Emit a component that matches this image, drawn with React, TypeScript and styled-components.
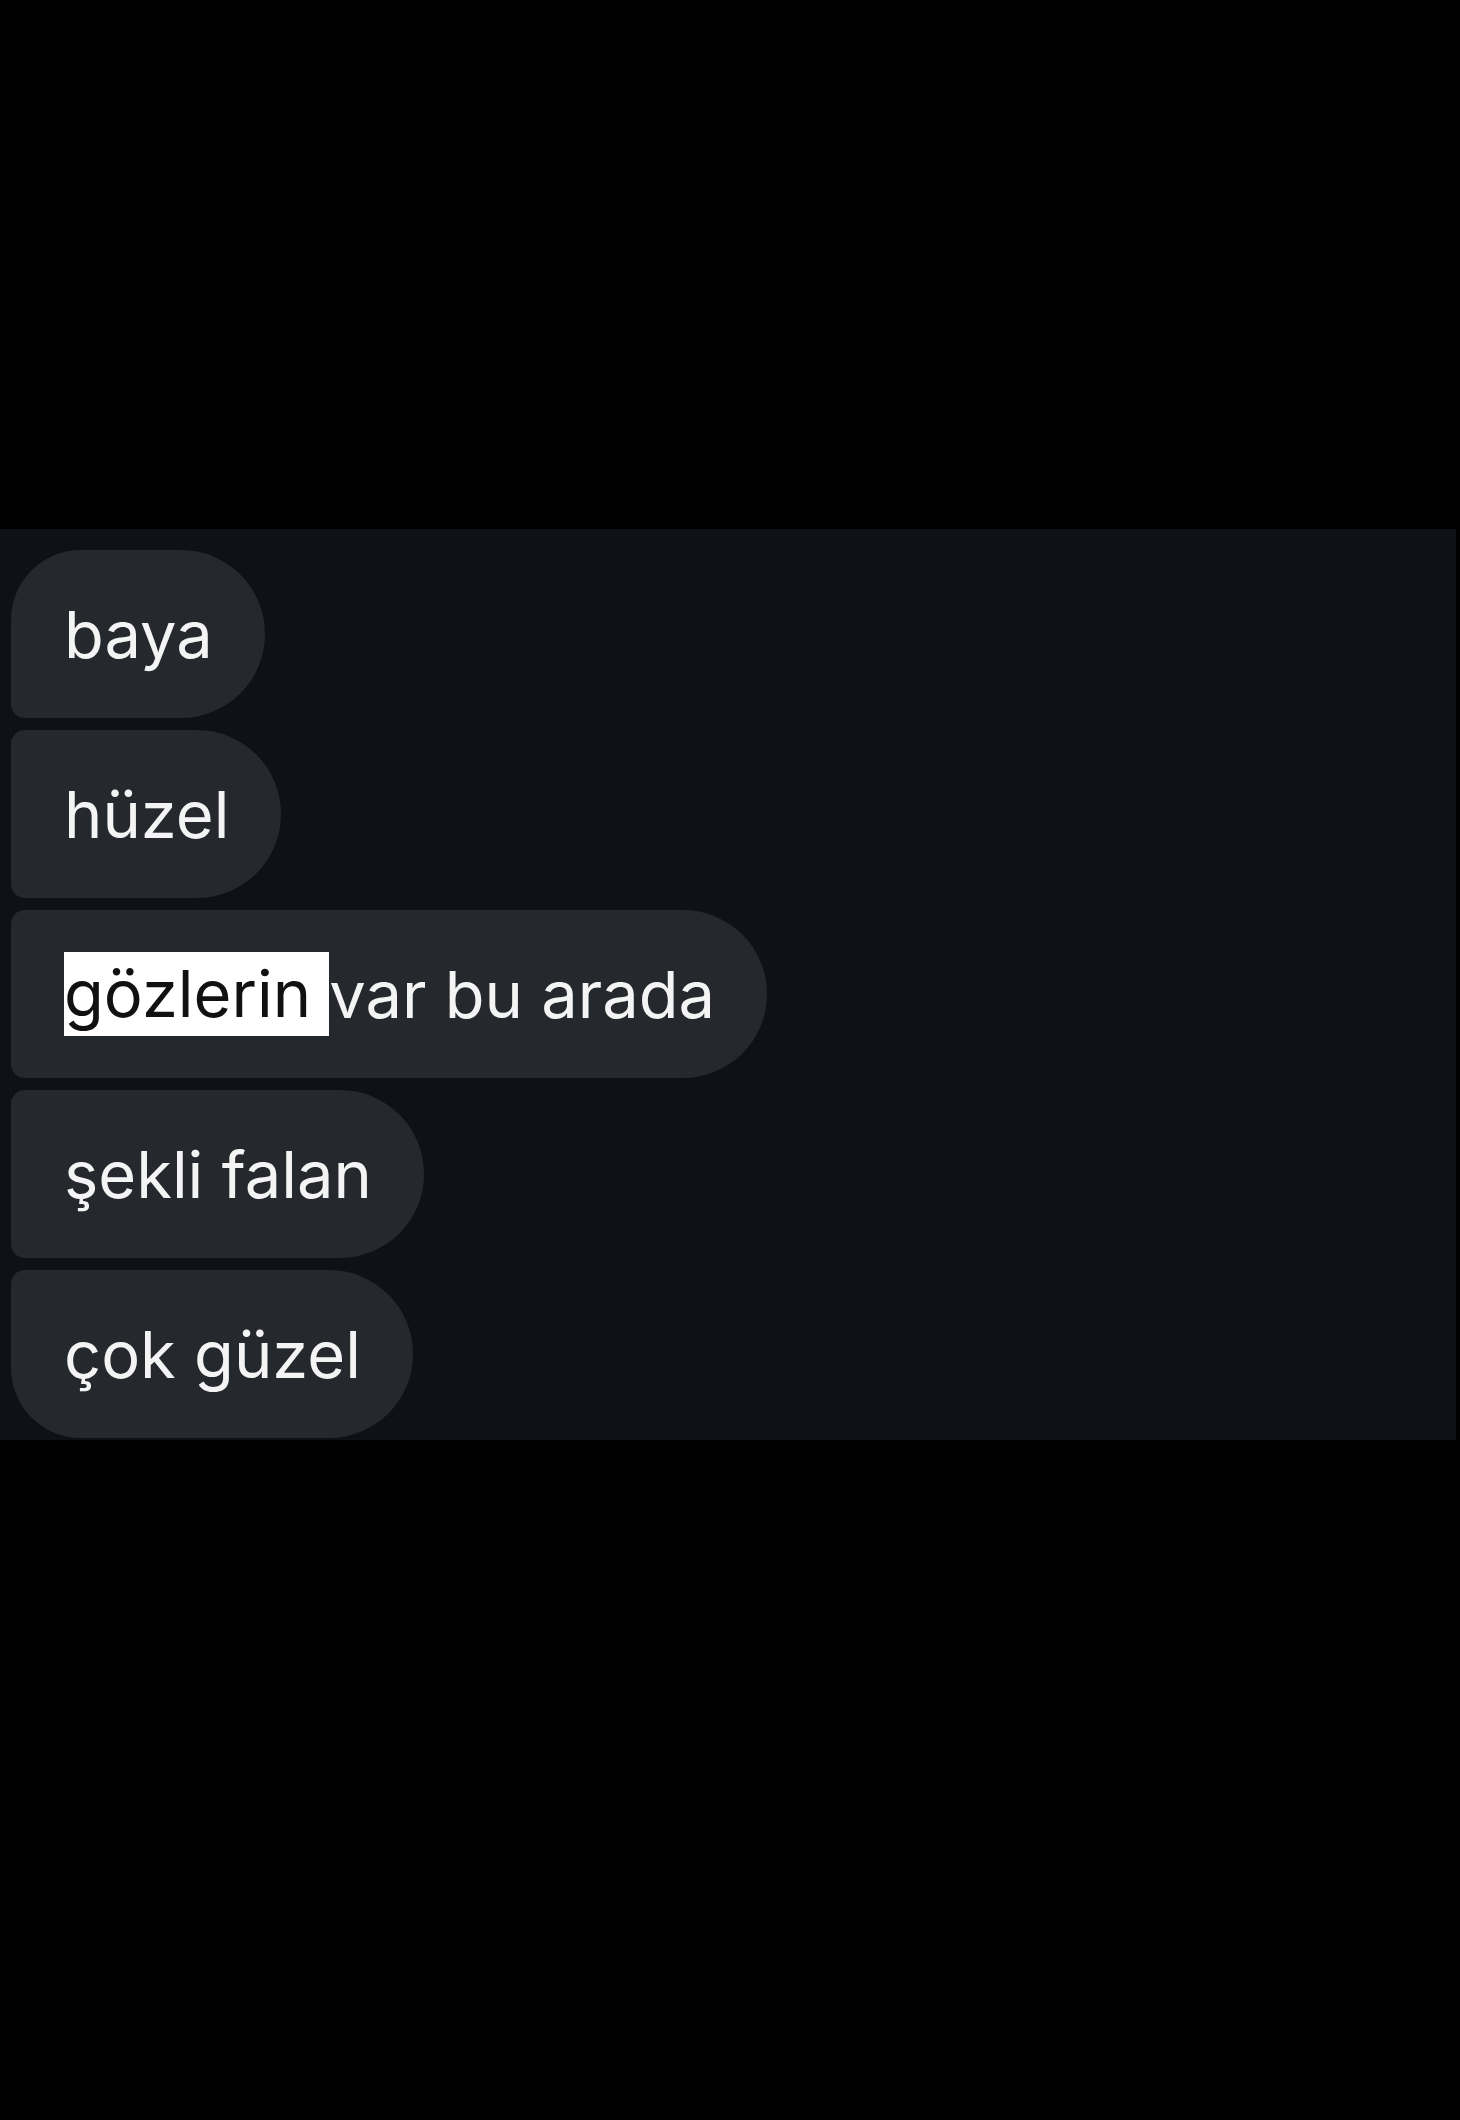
import React from 'react';
import styled, { createGlobalStyle } from 'styled-components';

const GlobalStyle = createGlobalStyle`
  html, body {
    margin: 0;
    padding: 0;
    background: #000;
  }
  body {
    font-family: Inter, "Liberation Sans", Arial, sans-serif;
  }
`;

const Page = styled.div`
  width: 1460px;
  min-height: 2120px;
  padding-top: 529px;
  box-sizing: border-box;
  background: #000;
`;

const ChatPanel = styled.section`
  width: 1456px;
  height: 911px;
  box-sizing: border-box;
  padding: 21px 0 0 11px;
  background: #0e1218;
  display: flex;
  flex-direction: column;
  align-items: flex-start;
  gap: 12px;
`;

const Bubble = styled.div<{ $first?: boolean; $last?: boolean }>`
  height: 168px;
  box-sizing: border-box;
  padding: 0 52px 0 53px;
  display: flex;
  align-items: center;
  background: #25282d;
  color: #f4f4f4;
  font-size: 65px;
  white-space: nowrap;
  border-radius: ${(p) => (p.$first ? '70px' : '14px')} 84px 84px
    ${(p) => (p.$last ? '70px' : '14px')};
`;

const Highlight = styled.span`
  display: inline-block;
  height: 84px;
  line-height: 84px;
  background: #fff;
  color: #111;
  white-space: pre;
`;

const messages = [
  { id: 1, text: 'baya' },
  { id: 2, text: 'hüzel' },
  { id: 3, marked: 'gözlerin ', text: 'var bu arada' },
  { id: 4, text: 'şekli falan' },
  { id: 5, text: 'çok güzel' },
];

const App: React.FC = () => {
  return (
    <Page>
      <GlobalStyle />
      <ChatPanel>
        {messages.map((m, i) => (
          <Bubble key={m.id} $first={i === 0} $last={i === messages.length - 1}>
            {m.marked && <Highlight>{m.marked}</Highlight>}
            {m.text}
          </Bubble>
        ))}
      </ChatPanel>
    </Page>
  );
};

export default App;
